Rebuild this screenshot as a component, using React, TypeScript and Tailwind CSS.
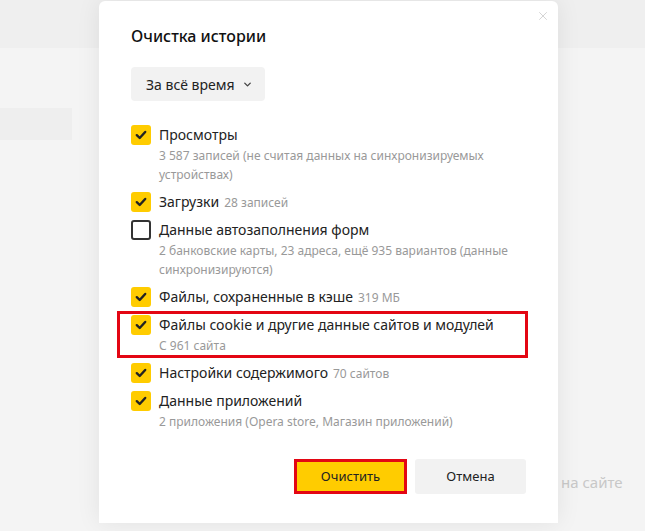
import { X, ChevronDown } from 'lucide-react'

type Item = { label: string; extra?: string; sub?: string; checked: boolean; mark?: boolean }

const items: Item[] = [
  { label: 'Просмотры', sub: '3 587 записей (не считая данных на синхронизируемых устройствах)', checked: true },
  { label: 'Загрузки', extra: '28 записей', checked: true },
  { label: 'Данные автозаполнения форм', sub: '2 банковские карты, 23 адреса, ещё 935 вариантов (данные синхронизируются)', checked: false },
  { label: 'Файлы, сохраненные в кэше', extra: '319 МБ', checked: true },
  { label: 'Файлы cookie и другие данные сайтов и модулей', sub: 'С 961 сайта', checked: true, mark: true },
  { label: 'Настройки содержимого', extra: '70 сайтов', checked: true },
  { label: 'Данные приложений', sub: '2 приложения (Opera store, Магазин приложений)', checked: true },
]

function Box({ checked }: { checked: boolean }) {
  if (!checked) {
    return <span className="w-5 h-5 shrink-0 rounded-[3px] border-2 border-[#333] bg-white" />
  }
  return (
    <span className="w-5 h-5 shrink-0 rounded-[3px] bg-[#ffcc00] flex items-center justify-center">
      <svg width="12" height="10" viewBox="0 0 12 10" fill="none">
        <path d="M1.8 5.2 L4.7 8 L10.2 2" stroke="#222" strokeWidth="2.4" strokeLinecap="round" strokeLinejoin="round" />
      </svg>
    </span>
  )
}

function Row({ item }: { item: Item }) {
  return (
    <div className={item.mark ? 'relative' : ''}>
      {item.mark && (
        <div className="absolute left-[-14px] right-0 top-[-4px] bottom-[-3px] border-[3px] border-[#e30613]" />
      )}
      <div className="flex items-center gap-[8px] h-5">
        <Box checked={item.checked} />
        <span className="text-[14px] text-[#222] leading-5">
          {item.label}
          {item.extra && <span className="text-[12px] text-[#999] ml-[5px]">{item.extra}</span>}
        </span>
      </div>
      {item.sub && (
        <div className="pl-[28px] pr-[20px] text-[12px] leading-[19px] text-[#999] mt-[1px]">{item.sub}</div>
      )}
    </div>
  )
}

export default function App() {
  return (
    <div className="relative w-[645px] h-[531px] overflow-hidden bg-[#f4f4f4]" style={{ fontFamily: '"Noto Sans", "Open Sans", sans-serif' }}>
      {/* page behind the dialog */}
      <div className="h-[48px] bg-[#efefef]" />
      <div className="flex">
        <div className="w-[72px] pt-[60px]">
          <div className="h-[32px] bg-[#eeeeee]" />
        </div>
        <div className="flex-1 pt-[423px] pl-[489px] text-[15px] text-[#c8c8c8]">на сайте</div>
      </div>

      {/* dialog */}
      <div className="absolute left-[99px] top-[1px] w-[459px] h-[522px] bg-white rounded-t-[6px] shadow-[0_0_24px_rgba(0,0,0,0.08)]">
        <button className="absolute right-[8px] top-[8px] text-[#cfcfcf]">
          <X size={14} strokeWidth={1.5} />
        </button>
        <div className="pl-[32px] pr-[30px] pt-[24px]">
          <h2 className="text-[16px] font-medium text-[#111] leading-[22px]">Очистка истории</h2>
          <div className="mt-[20px] inline-flex items-center h-[34px] pl-[15px] pr-[12px] rounded-[4px] bg-[#f2f2f2] text-[14px] text-[#222] gap-[8px]">
            За всё время
            <ChevronDown size={11} strokeWidth={3} className="text-[#444]" />
          </div>
          <div className="mt-[24px] flex flex-col gap-2">
            {items.map(it => <Row key={it.label} item={it} />)}
          </div>
          <div className="mt-[28px] flex justify-end gap-[8px] pr-[2px]">
            <button className="w-[113px] h-[35px] bg-[#ffcc00] border-[3px] border-[#e30613] text-[13px] text-[#222]">Очистить</button>
            <button className="w-[111px] h-[35px] bg-[#f2f2f2] rounded-[3px] text-[13px] text-[#222]">Отмена</button>
          </div>
        </div>
      </div>
    </div>
  )
}
